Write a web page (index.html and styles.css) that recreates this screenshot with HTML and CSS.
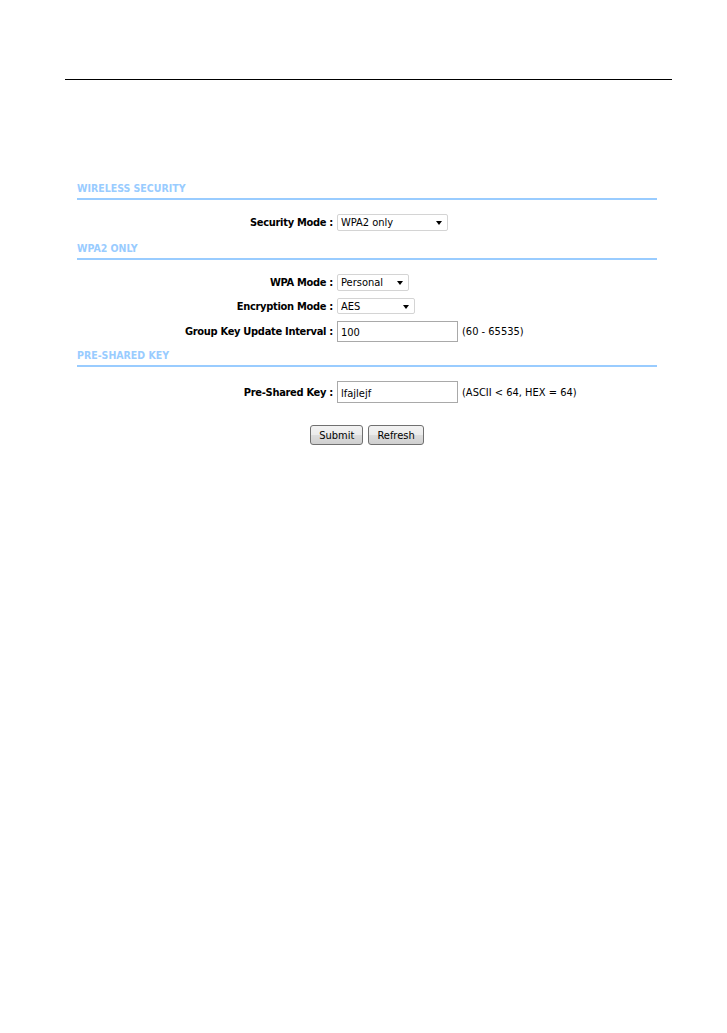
FILE: index.html
```html
<!DOCTYPE html>
<html lang="en">
<head>
    <meta charset="UTF-8">
    <title>Wireless Security</title>
    <link rel="stylesheet" href="styles.css">
</head>
<body>
    <div class="page-rule"></div>

    <div class="content">
        <div class="section-title">WIRELESS SECURITY</div>
        <div class="rows rows-mode">
            <div class="form-row">
                <label class="label">Security Mode :</label>
                <div class="field">
                    <div class="select-box w-security">
                        <select><option>WPA2 only</option></select>
                        <span class="arrow"></span>
                    </div>
                </div>
            </div>
        </div>

        <div class="section-title">WPA2 ONLY</div>
        <div class="rows rows-wpa">
            <div class="form-row">
                <label class="label">WPA Mode :</label>
                <div class="field">
                    <div class="select-box w-wpa">
                        <select><option>Personal</option></select>
                        <span class="arrow"></span>
                    </div>
                </div>
            </div>
            <div class="form-row">
                <label class="label">Encryption Mode :</label>
                <div class="field">
                    <div class="select-box w-enc">
                        <select><option>AES</option></select>
                        <span class="arrow"></span>
                    </div>
                </div>
            </div>
            <div class="form-row">
                <label class="label">Group Key Update Interval :</label>
                <div class="field">
                    <input class="text-input" type="text" value="100">
                    <span class="hint">(60 - 65535)</span>
                </div>
            </div>
        </div>

        <div class="section-title">PRE-SHARED KEY</div>
        <div class="rows rows-psk">
            <div class="form-row">
                <label class="label">Pre-Shared Key :</label>
                <div class="field">
                    <input class="text-input tall" type="text" value="lfajlejf">
                    <span class="hint">(ASCII &lt; 64, HEX = 64)</span>
                </div>
            </div>
        </div>

        <div class="buttons">
            <button class="btn">Submit</button>
            <button class="btn">Refresh</button>
        </div>
    </div>
</body>
</html>
```

FILE: styles.css
```css
body {
    margin: 0;
    background: #fff;
    font-family: "DejaVu Sans Condensed", Tahoma, "Liberation Sans", sans-serif;
    font-size: 11px;
    color: #000;
}

.page-rule {
    width: 607px;
    margin: 79px 0 0 65px;
    border-top: 1px solid #000;
}

.content {
    width: 580px;
    margin: 102px 0 0 77px;
}

.section-title {
    font-size: 10.5px;
    font-weight: bold;
    line-height: 12px;
    color: #99ccff;
    padding-bottom: 4px;
    border-bottom: 2px solid #99ccff;
}

.rows {
    display: flex;
    flex-direction: column;
    gap: 7px;
    padding: 14px 0 7px;
}

.rows-mode {
    padding-bottom: 11px;
}

.rows-psk {
    padding: 14px 0 0;
}

.form-row {
    display: grid;
    grid-template-columns: 256px auto;
    column-gap: 4px;
    align-items: center;
}

.label {
    text-align: right;
    font-weight: bold;
    letter-spacing: -0.3px;
    white-space: nowrap;
}

.field {
    display: flex;
    align-items: center;
    gap: 4px;
}

.select-box {
    position: relative;
    height: 17px;
}

.select-box select {
    appearance: none;
    -webkit-appearance: none;
    width: 100%;
    height: 100%;
    margin: 0;
    padding: 0 0 0 3px;
    border: 1px solid #d4d4d4;
    border-radius: 2px;
    background: #fff;
    font-family: inherit;
    font-size: 11px;
    color: #000;
}

.select-box .arrow {
    position: absolute;
    right: 6px;
    top: 7px;
    width: 0;
    height: 0;
    border-left: 3px solid transparent;
    border-right: 3px solid transparent;
    border-top: 4px solid #000;
    pointer-events: none;
}

.w-security { width: 111px; }
.w-wpa { width: 72px; }
.w-enc { width: 78px; height: 16px; }

.text-input {
    box-sizing: border-box;
    width: 121px;
    height: 21px;
    margin: 0;
    padding: 2px 3px 0;
    border: 1px solid #a9a9a9;
    font-family: inherit;
    font-size: 11px;
    color: #000;
}

.text-input.tall {
    height: 22px;
}

.hint {
    white-space: nowrap;
}

.buttons {
    display: flex;
    justify-content: center;
    gap: 5px;
    margin-top: 22px;
}

.btn {
    height: 20px;
    padding: 0 8px;
    border: 1px solid #707070;
    border-radius: 3px;
    background: linear-gradient(#f2f2f2, #ebebeb 50%, #dddddd 50%, #cfcfcf);
    font-family: inherit;
    font-size: 11px;
    color: #000;
}
```
